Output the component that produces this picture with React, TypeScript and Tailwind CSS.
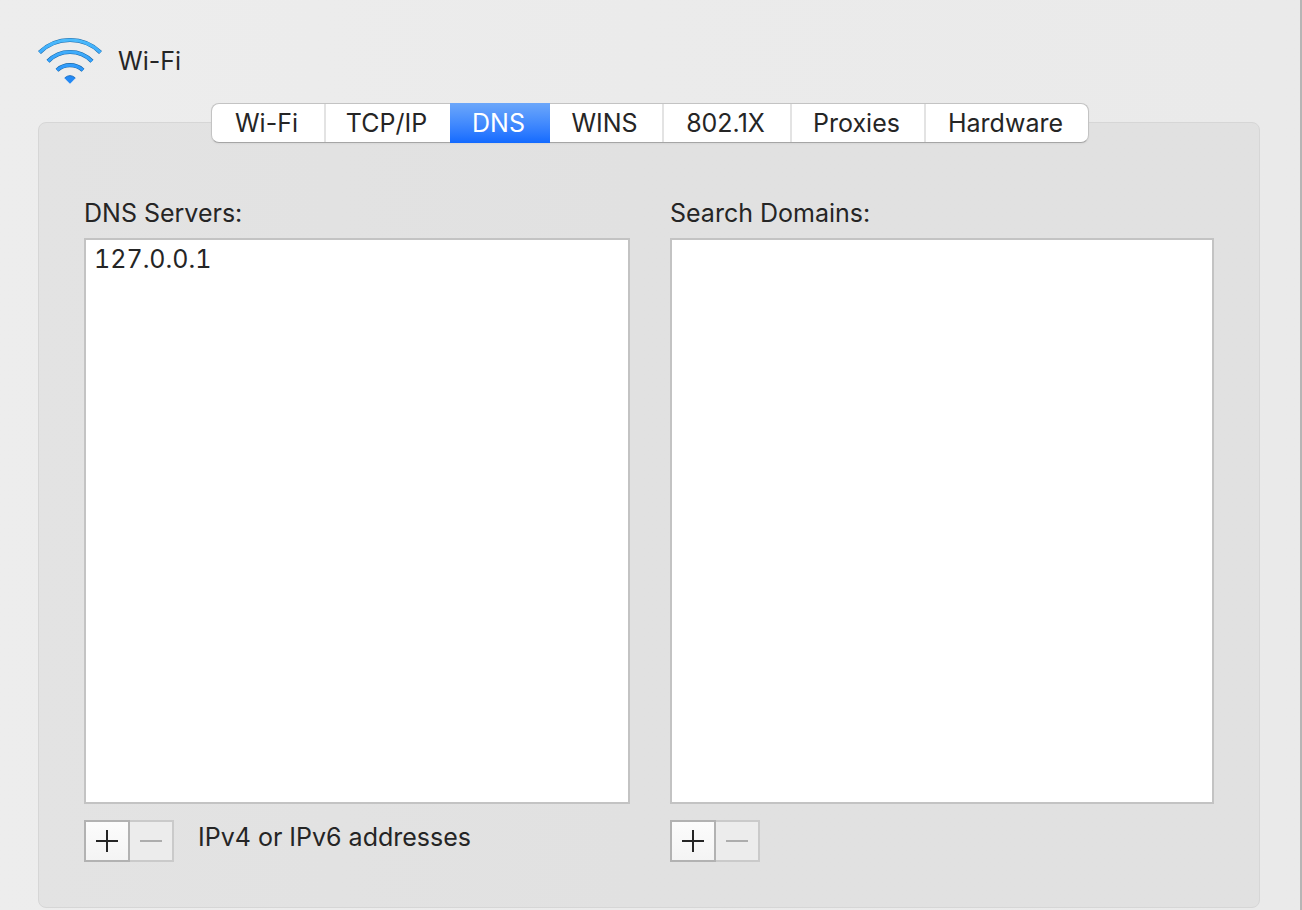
import { useState } from 'react';

const tabs = [
  { name: 'Wi-Fi', width: 'w-[114px]' },
  { name: 'TCP/IP', width: 'w-[124px]' },
  { name: 'DNS', width: 'w-[100px]' },
  { name: 'WINS', width: 'w-[114px]' },
  { name: '802.1X', width: 'w-[128px]' },
  { name: 'Proxies', width: 'w-[134px]' },
  { name: 'Hardware', width: 'w-[162px]' },
];

function WifiIcon() {
  const arcs = ['M39.5 52.4A43.7 43.7 0 0 1 100.5 52.4', 'M48 61.3A30.7 30.7 0 0 1 92 61.3', 'M57 70.2A19.4 19.4 0 0 1 83 70.2'];
  return (
    <svg width="64" height="48" viewBox="38 37 64 48" fill="none" aria-hidden="true">
      <defs>
        <linearGradient id="wave" gradientUnits="userSpaceOnUse" x1="0" y1="38" x2="0" y2="84">
          <stop offset="0" stopColor="#4dbdfc" />
          <stop offset="1" stopColor="#1f87fb" />
        </linearGradient>
      </defs>
      {arcs.map((d) => (
        <g key={d}>
          <path d={d} stroke="#1767a8" strokeWidth="4.2" />
          <path d={d} stroke="url(#wave)" strokeWidth="3" />
        </g>
      ))}
      <path d="M64.3 78Q70 73 75.7 78L70 83.8Z" fill="#2389f5" />
      <path d="M64.8 77.8Q70 73.4 75.2 77.8" stroke="#1767b8" strokeWidth="0.8" />
    </svg>
  );
}

function ListControls({ subject }: { subject: string }) {
  return (
    <div className="flex">
      <button
        type="button"
        aria-label={`Add ${subject}`}
        className="flex h-[42px] w-[46px] items-center justify-center border-2 border-[#b2b2b2] bg-linear-to-b from-[#fcfcfc] to-[#f4f4f4]"
      >
        <svg width="22" height="22" viewBox="0 0 22 22" stroke="#252525" strokeWidth="2" aria-hidden="true">
          <path d="M0 11H22M11 0V22" />
        </svg>
      </button>
      <button
        type="button"
        disabled
        aria-label={`Remove ${subject}`}
        className="flex h-[42px] w-11 items-center justify-center border-2 border-l-0 border-[#cacaca] bg-[#ececec]"
      >
        <svg width="22" height="22" viewBox="0 0 22 22" stroke="#adadad" strokeWidth="2" aria-hidden="true">
          <path d="M0 11H22" />
        </svg>
      </button>
    </div>
  );
}

function ListPane({ id, title, subject, items, hint }: { id: string; title: string; subject: string; items: string[]; hint?: string }) {
  return (
    <section className="flex min-w-0 flex-col">
      <h2 id={id} className="leading-[30px]">{title}</h2>
      <ul role="listbox" aria-labelledby={id} className="mt-2.5 h-[566px] border-2 border-[#c3c3c3] bg-white px-2">
        {items.map((item) => (
          <li key={item} role="option" aria-selected={false} className="leading-[38px] tabular-nums">{item}</li>
        ))}
      </ul>
      <div className="mt-4 flex gap-6">
        <ListControls subject={subject} />
        {hint && <p className="leading-[34px]">{hint}</p>}
      </div>
    </section>
  );
}

export default function App() {
  const [active, setActive] = useState('DNS');
  return (
    <main className="min-h-screen border-r-2 border-[#b5b5b5] bg-linear-to-r from-[#ededed] via-[#ebebeb] to-[#eaeaea] pr-10 pb-0.5 pl-[38px] font-['Inter','Liberation_Sans',sans-serif] text-[25px] text-[#252525]">
      <header className="flex items-center gap-4 pt-9">
        <WifiIcon />
        <h1 className="leading-[50px]">Wi-Fi</h1>
      </header>
      <div className="mt-9 rounded-lg border border-[#d6d6d6] bg-linear-to-r from-[#e3e3e3] via-[#e1e1e1] to-[#e1e1e1] px-[45px] pb-[45px]">
        <div className="-mt-5 flex justify-center pl-0.5">
          <div role="tablist" aria-label="Network settings" className="flex h-10 rounded-lg border border-[#c3c3c3] border-b-[#a5a5a5] bg-white shadow-xs">
            {tabs.map(({ name, width }) => (
              <button
                key={name}
                type="button"
                role="tab"
                aria-selected={name === active}
                onClick={() => setActive(name)}
                className={`${width} pr-[3px] leading-9 first:rounded-l-lg last:rounded-r-lg ${
                  name === active
                    ? '-my-px bg-linear-to-b from-[#6ca7fa] to-[#126aff] text-white'
                    : name === 'Hardware' || name === 'TCP/IP'
                      ? ''
                      : 'border-r-2 border-[#e3e3e3]'
                }`}
              >
                {name}
              </button>
            ))}
          </div>
        </div>
        <div className="mt-[55px] grid grid-cols-[546fr_544fr] gap-10">
          <ListPane id="dns-servers" title="DNS Servers:" subject="DNS server" items={['127.0.0.1']} hint="IPv4 or IPv6 addresses" />
          <ListPane id="search-domains" title="Search Domains:" subject="search domain" items={[]} />
        </div>
      </div>
    </main>
  );
}
